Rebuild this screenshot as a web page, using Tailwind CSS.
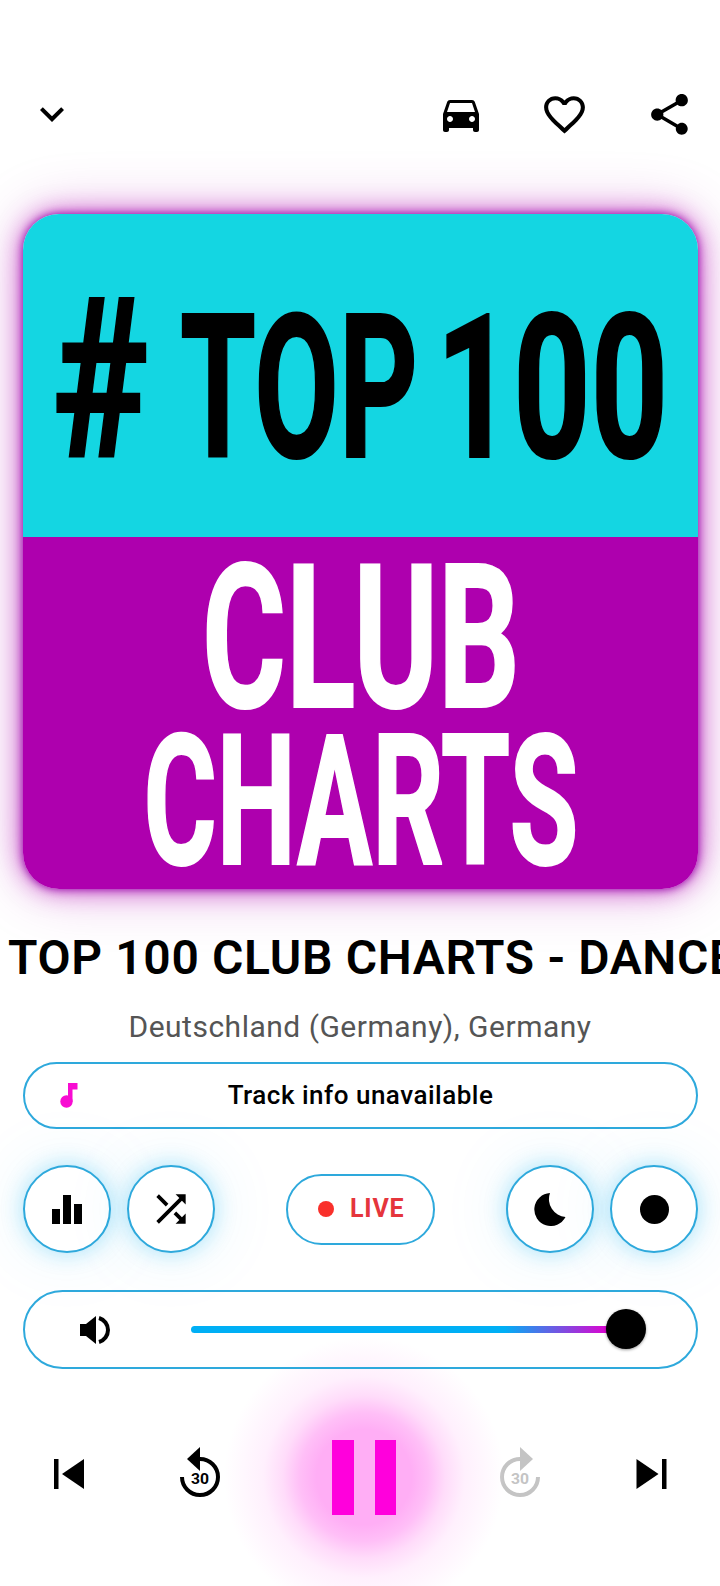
<!DOCTYPE html>
<html lang="en">
<head>
    <meta charset="UTF-8">
    <meta name="viewport" content="width=device-width, initial-scale=1.0">
    <title>Now Playing</title>
    <script src="https://cdn.jsdelivr.net/npm/@tailwindcss/browser@4"></script>
</head>
<body class="bg-white">
    <div class="w-[720px] h-[1586px] overflow-hidden bg-white text-black font-[Roboto,sans-serif]">

        <!-- top bar -->
        <div class="flex items-start h-[49px] mt-[90px] pl-[28px] pr-[26px]">
            <svg class="w-[48px] h-[48px]" viewBox="0 0 24 24" fill="currentColor"><path d="M16.59 8.59L12 13.17 7.41 8.59 6 10l6 6 6-6z"/></svg>
            <svg class="w-[48px] h-[48px] ml-auto" viewBox="0 0 24 24" fill="currentColor"><path d="M18.92 6.01C18.72 5.42 18.16 5 17.5 5h-11c-.66 0-1.21.42-1.42 1.01L3 12v8c0 .55.45 1 1 1h1c.55 0 1-.45 1-1v-1h12v1c0 .55.45 1 1 1h1c.55 0 1-.45 1-1v-8l-2.08-5.99zM6.5 16c-.83 0-1.5-.67-1.5-1.5S5.67 13 6.5 13s1.5.67 1.5 1.5S7.33 16 6.5 16zm11 0c-.83 0-1.5-.67-1.5-1.5s.67-1.5 1.5-1.5 1.5.67 1.5 1.5-.67 1.5-1.5 1.5zM5 11l1.5-4.5h11L19 11H5z"/></svg>
            <svg class="w-[49px] h-[49px] ml-[55px]" viewBox="0 0 24 24" fill="currentColor"><path d="M16.5 3c-1.74 0-3.41.81-4.5 2.09C10.91 3.81 9.24 3 7.5 3 4.42 3 2 5.42 2 8.5c0 3.78 3.4 6.86 8.55 11.54L12 21.35l1.45-1.32C18.6 15.36 22 12.28 22 8.5 22 5.42 19.58 3 16.5 3zm-4.4 15.55l-.1.1-.1-.1C7.14 14.24 4 11.39 4 8.5 4 6.5 5.5 5 7.5 5c1.54 0 3.04.99 3.57 2.36h1.87C13.46 5.99 14.96 5 16.5 5c2 0 3.5 1.5 3.5 3.5 0 2.89-3.14 5.74-7.9 10.05z"/></svg>
            <svg class="w-[49px] h-[49px] ml-[56px]" viewBox="0 0 24 24" fill="currentColor"><path d="M18 16.08c-.76 0-1.44.3-1.96.77L8.91 12.7c.05-.23.09-.46.09-.7s-.04-.47-.09-.7l7.05-4.11c.54.5 1.25.81 2.04.81 1.66 0 3-1.34 3-3s-1.34-3-3-3-3 1.34-3 3c0 .24.04.47.09.7L8.04 9.81C7.5 9.31 6.79 9 6 9c-1.66 0-3 1.34-3 3s1.34 3 3 3c.79 0 1.5-.31 2.04-.81l7.12 4.16c-.05.21-.08.43-.08.65 0 1.61 1.31 2.92 2.92 2.92 1.61 0 2.92-1.31 2.92-2.92s-1.31-2.92-2.92-2.92z"/></svg>
        </div>

        <!-- artwork -->
        <div class="w-[675px] h-[675px] ml-[23px] mt-[75px] rounded-[36px] overflow-hidden shadow-[0_0_8px_rgba(150,10,170,1),0_0_26px_rgba(175,0,175,0.7),0_0_60px_rgba(175,0,175,0.3)]">
            <svg class="block w-[675px] h-[675px]" viewBox="0 0 675 675" font-family="'Liberation Sans Narrow', Roboto, sans-serif" font-weight="700" stroke-width="2">
                <rect width="675" height="323" fill="#14d6e2"/>
                <rect y="323" width="675" height="352" fill="#ae00ae"/>
                <text x="29.500" y="243" font-size="223" textLength="96" lengthAdjust="spacingAndGlyphs" fill="#000" stroke="#000">#</text>
                <text x="157" y="243" font-size="201" textLength="238" lengthAdjust="spacingAndGlyphs" fill="#000" stroke="#000">TOP</text>
                <text x="413" y="243" font-size="201" textLength="232" lengthAdjust="spacingAndGlyphs" fill="#000" stroke="#000">100</text>
                <text x="179" y="493" font-size="201" textLength="318" lengthAdjust="spacingAndGlyphs" fill="#fff" stroke="#fff">CLUB</text>
                <text x="120.500" y="650" font-size="181" textLength="435" lengthAdjust="spacingAndGlyphs" fill="#fff" stroke="#fff">CHARTS</text>
            </svg>
        </div>

        <!-- station -->
        <div class="h-[60px] mt-[39px] pl-[8px] text-[48px] leading-[60px] font-semibold tracking-[0.65px] whitespace-nowrap overflow-hidden">TOP 100 CLUB CHARTS - DANCE &amp; ELECTRO</div>
        <div class="h-[40px] mt-[19px] text-[30px] leading-[40px] tracking-[0.5px] text-center text-[#555555]">Deutschland (Germany), Germany</div>

        <!-- track info -->
        <div class="flex items-center h-[67px] w-[675px] ml-[23px] mt-[15px] pl-[35px] border-2 border-[#2ea9dc] rounded-full">
            <svg class="w-[18px] h-[25px]" viewBox="0 0 18 25" fill="#f80cd2"><circle cx="6.5" cy="18.5" r="6.2"/><path d="M8 0h9.500v6.500H12.500V18.500H8z"/></svg>
            <div class="flex-1 pr-[53px] text-center text-[26px] font-medium tracking-[0.5px]">Track info unavailable</div>
        </div>

        <!-- controls -->
        <div class="flex items-center justify-between h-[88px] w-[675px] ml-[23px] mt-[36px]">
            <div class="flex gap-[16px]">
                <div class="flex items-center justify-center w-[88px] h-[88px] bg-white border-2 border-[#2ea9dc] rounded-full shadow-[0_0_22px_rgba(0,174,239,0.3),0_0_70px_rgba(0,174,239,0.12)]">
                    <svg class="w-[30px] h-[29px]" viewBox="0 0 30 29" fill="#000"><rect y="14" width="8" height="15"/><rect x="11" width="8" height="29"/><rect x="22" y="9" width="8" height="20"/></svg>
                </div>
                <div class="flex items-center justify-center w-[88px] h-[88px] bg-white border-2 border-[#2ea9dc] rounded-full shadow-[0_0_22px_rgba(0,174,239,0.3),0_0_70px_rgba(0,174,239,0.12)]">
                    <svg class="w-[44px] h-[44px]" viewBox="0 0 24 24" fill="#000"><path d="M10.59 9.17L5.41 4 4 5.41l5.17 5.17 1.42-1.41zM14.5 4l2.04 2.04L4 18.59 5.41 20 17.96 7.46 20 9.5V4h-5.500zm.33 9.41l-1.41 1.41 3.13 3.13L14.5 20H20v-5.500l-2.04 2.04-3.13-3.13z"/></svg>
                </div>
            </div>
            <div class="flex items-center w-[149px] h-[71px] pl-[30px] bg-white border-2 border-[#2ea9dc] rounded-full">
                <span class="w-[16px] h-[16px] rounded-full bg-[#f9302b]"></span>
                <span class="ml-[16px] text-[25px] font-bold text-[#e5353c] tracking-[0.8px]">LIVE</span>
            </div>
            <div class="flex gap-[16px]">
                <div class="flex items-center justify-center w-[88px] h-[88px] bg-white border-2 border-[#2ea9dc] rounded-full shadow-[0_0_22px_rgba(0,174,239,0.3),0_0_70px_rgba(0,174,239,0.12)]">
                    <svg class="w-[32px] h-[33px]" viewBox="0 0 32 33" fill="#000"><path d="M16 0A16.500 16.500 0 1 0 31.500 24A18 18 0 0 1 16 0Z"/></svg>
                </div>
                <div class="flex items-center justify-center w-[88px] h-[88px] bg-white border-2 border-[#2ea9dc] rounded-full shadow-[0_0_22px_rgba(0,174,239,0.3),0_0_70px_rgba(0,174,239,0.12)]">
                    <span class="w-[29px] h-[29px] rounded-full bg-black"></span>
                </div>
            </div>
        </div>

        <!-- volume -->
        <div class="relative z-10 flex items-center h-[79px] w-[675px] ml-[23px] mt-[37px] pl-[55px] border-2 border-[#2ea9dc] rounded-full">
            <svg class="w-[30px] h-[30px]" viewBox="0 0 30 30" fill="#000"><path d="M0 9h6l10-8v28L6 21H0z"/><path d="M19 3A12.500 12.500 0 0 1 19 27" fill="none" stroke="#000" stroke-width="4"/></svg>
            <div class="relative w-[435px] h-[7px] ml-[81px] rounded-full bg-[linear-gradient(90deg,#00aff5_72%,#e000d0_96%)]">
                <span class="absolute right-[-20px] top-[-17px] w-[40px] h-[40px] rounded-full bg-black shadow-[0_1px_3px_rgba(0,0,0,0.4)]"></span>
            </div>
        </div>

        <!-- transport -->
        <div class="flex items-center h-[100px] mt-[58px] pl-[54px]">
            <svg class="w-[30px] h-[30px] mb-[6px]" viewBox="0 0 30 30" fill="#000"><rect width="4.500" height="30"/><path d="M30 0v30L8 15z"/></svg>
            <svg class="w-[41px] h-[50px] ml-[95px] mb-[10px]" viewBox="0 0 41 50"><path d="M21 12A18 18 0 1 1 3 30" fill="none" stroke="#000" stroke-width="4"/><path d="M8 12L21 0V24z" fill="#000"/><text x="21" y="37" text-anchor="middle" font-size="15" font-weight="700" textLength="18" lengthAdjust="spacingAndGlyphs" fill="#000">30</text></svg>
            <div class="relative isolate flex justify-between w-[64px] h-[75px] ml-[112px]">
                <div class="absolute left-[-108px] top-[-103px] w-[280px] h-[280px] -z-10 bg-[radial-gradient(closest-side,#ffaef5_0%,#ffaef5_34%,#ffbff7_46%,#ffdcfa_58%,#fff0fd_72%,#ffffff00_100%)]"></div>
                <span class="w-[22px] h-[75px] bg-[#ff00dc]"></span>
                <span class="w-[21px] h-[75px] bg-[#ff00dc]"></span>
            </div>
            <svg class="w-[41px] h-[50px] ml-[104px] mb-[10px]" viewBox="0 0 41 50"><path d="M20 12A18 18 0 1 0 38 30" fill="none" stroke="#c4c4c4" stroke-width="4"/><path d="M33 12L20 0V24z" fill="#c4c4c4"/><text x="20" y="37" text-anchor="middle" font-size="15" font-weight="700" textLength="18" lengthAdjust="spacingAndGlyphs" fill="#c4c4c4">30</text></svg>
            <svg class="w-[31px] h-[30px] ml-[95px] mb-[6px]" viewBox="0 0 30 30" fill="#000"><rect x="25.500" width="4.500" height="30"/><path d="M0 0v30L22 15z"/></svg>
        </div>
    </div>
</body>
</html>
